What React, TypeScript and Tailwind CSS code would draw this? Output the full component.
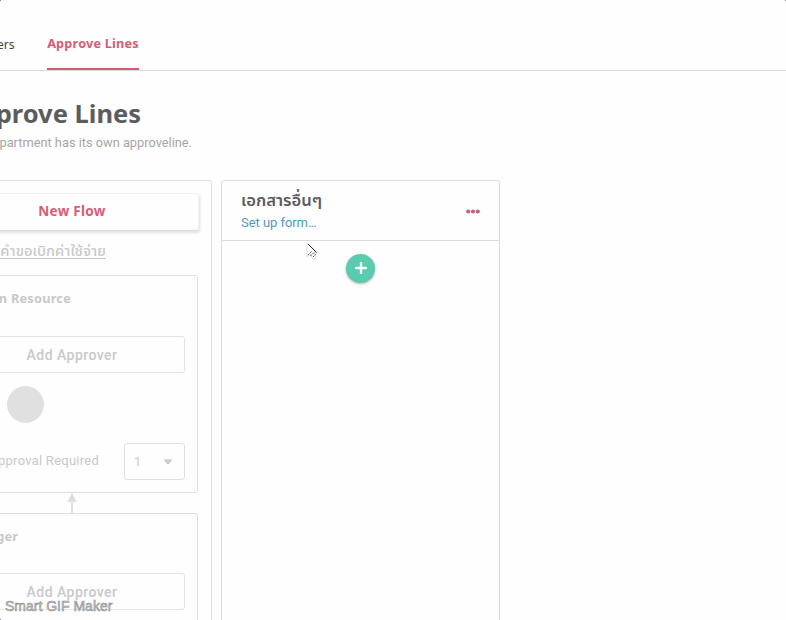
const dim = 'text-[#c9c9c9]';
const rounded = 'font-["Noto_Sans","Open_Sans",sans-serif]';
const din = 'font-[Roboto,sans-serif]';
const thai = 'font-["Noto_Sans_Thai","Noto_Sans",sans-serif]';

function AddApprover() {
  return (
    <div className={`flex h-[37px] items-center justify-center rounded-[3px] border border-[#e3e3e3] pt-[2px] pr-px text-[14px] font-medium tracking-[0.45px] ${din} ${dim}`}>
      Add Approver
    </div>
  );
}

function Arrow() {
  return (
    <svg className="mx-auto block" width="14" height="21" viewBox="0 0 14 21">
      <path d="M6 0.5 10.8 9H1.2Z" fill="#dedede" />
      <path d="M6 8V21" stroke="#dedede" strokeWidth="2" />
    </svg>
  );
}

function FlowColumn() {
  return (
    <section className="h-[460px] w-[279px] shrink-0 rounded-[3px] border border-[#dfdfdf] px-[13px] pt-3">
      <button className={`-ml-[2px] flex h-[38px] w-[254px] items-center justify-center rounded-[3px] border border-[#f0f0f0] border-b-[#dcdcdc] pb-[2px] text-[13.5px] font-bold tracking-[0.3px] text-[#dd5b77] shadow-[1px_2px_3px_rgba(0,0,0,0.12)] ${rounded}`}>
        New Flow
      </button>
      <div className={`mt-[9px] flex h-[35px] justify-end pr-[92px] pt-[2px] text-[14.8px] leading-[19px] font-medium ${thai} ${dim}`}>
        <span className="whitespace-pre underline underline-offset-2"> คำขอเบิกค่าใช้จ่าย</span>
      </div>
      <article className="h-[218px] rounded-[3px] border border-[#dfdfdf] px-3">
        <h3 className={`flex h-[60px] items-center justify-end pr-[114px] pb-[14px] text-[12.8px] font-bold tracking-[0.2px] ${rounded} ${dim}`}>
          <span className="whitespace-nowrap">Human Resource</span>
        </h3>
        <AddApprover />
        <div className="mt-[13px] ml-[47px] h-[37px] w-[37px] rounded-full bg-[#e0e0e0]" />
        <div className="mt-5 flex items-center justify-end">
          <span className={`mr-[25px] pb-[2px] whitespace-nowrap text-[13px] tracking-[0.25px] ${din} ${dim}`}>Approval Required</span>
          <div className={`flex h-[37px] w-[61px] items-center justify-between rounded-[3px] border border-[#dfdfdf] pr-[11px] pl-[9px] text-[13px] ${din} ${dim}`}>
            1
            <svg width="10" height="6" viewBox="0 0 10 6"><path d="M0.5 0.5h9L5.5 5.3H4.5Z" fill="#c9c9c9" /></svg>
          </div>
        </div>
      </article>
      <Arrow />
      <article className="-mt-px h-[218px] rounded-[3px] border border-[#dfdfdf] px-3">
        <h3 className={`flex h-[59px] items-center justify-end pr-[167px] pb-[14px] text-[12.8px] font-bold tracking-[0.1px] ${rounded} ${dim}`}>
          <span>Manager</span>
        </h3>
        <AddApprover />
      </article>
    </section>
  );
}

function FormColumn() {
  return (
    <section className="h-[460px] w-[279px] shrink-0 rounded-[3px] border border-[#dcdcdc]">
      <header className="flex h-[60px] items-center justify-between border-b border-[#dcdcdc] px-[19px]">
        <div className="pt-[3px]">
          <h2 className={`h-[23px] text-[16.6px] leading-[20px] font-semibold text-[#5b5b5d] ${thai}`}>เอกสารอื่นๆ</h2>
          <div className={`h-5 text-[13px] leading-[18px] tracking-[-0.05px] text-[#5497bb] ${din}`}>Set up form<span className="tracking-[-0.8px]">...</span></div>
        </div>
        <svg className="mt-px" width="14" height="5" viewBox="0 0 14 5" fill="#c9607a">
          <circle cx="2.2" cy="2.5" r="2.1" /><circle cx="7" cy="2.5" r="2.1" /><circle cx="11.8" cy="2.5" r="2.1" />
        </svg>
      </header>
      <button className="mx-auto mt-[13px] flex h-[29px] w-[29px] items-center justify-center rounded-full bg-[#5bcbaf] pb-[2px] shadow-[0_1px_3px_rgba(0,0,0,0.28)]">
        <svg className="block" width="12" height="12" viewBox="0 0 12 12"><path d="M6 1V11M1 6H11" stroke="#f3fffb" strokeWidth="2.4" strokeLinecap="round" /></svg>
      </button>
    </section>
  );
}

export default function App() {
  return (
    <div className="relative h-[620px] w-[786px] overflow-hidden bg-[#fefefe]">
      <nav className={`flex h-[71px] items-end border-b border-[#dadada] ${rounded}`}>
        <span className="-ml-[3px] flex h-[70px] w-[50px] items-center pt-[20px] text-[12px] text-[#444]">ers</span>
        <span className="flex h-[70px] w-[92px] items-center justify-center border-b-2 border-[#d75b76] pt-[20px] text-[12.7px] font-bold tracking-[0.2px] whitespace-nowrap text-[#d75b76]">Approve Lines</span>
      </nav>
      <div className="h-[109px] pt-[24px]">
        <h1 className={`flex h-[38px] w-[141px] items-center justify-end pb-[2px] text-[25.5px] font-bold whitespace-nowrap text-[#5c5c5e] ${rounded}`}>Approve Lines</h1>
        <p className={`flex h-5 w-[192px] items-center justify-end text-[12.8px] whitespace-nowrap text-[#a6a6a6] ${din}`}>partment has its own approveline.</p>
      </div>
      <main className="-ml-[67px] flex gap-[9px]">
        <FlowColumn />
        <FormColumn />
      </main>
      <svg className="absolute top-[241px] left-[304px]" width="18" height="21" viewBox="0 0 18 21">
        <path d="M3 2V16L6.5 13 9 18.5 12 17 10 12H14Z" fill="#fff" stroke="#dcdcdc" />
        <path d="M4 3 12.5 11.5" stroke="#333" fill="none" />
        <path d="M4 14 8 10M6.5 15 11 10.5M9 16 12 13" stroke="#555" strokeDasharray="2 1" fill="none" />
      </svg>
      <div className="absolute top-[598px] left-[5px] font-['Liberation_Sans',sans-serif] text-[14px] leading-[17px] whitespace-nowrap text-[#c8c8c8] [-webkit-text-stroke:0.5px_#858585]">Smart GIF Maker</div>
      <div className="absolute top-0 left-0 h-px w-px bg-[#888]" />
      <div className="absolute top-0 right-0 h-px w-px bg-[#888]" />
      <div className="absolute bottom-0 left-0 h-px w-px bg-[#888]" />
    </div>
  );
}
